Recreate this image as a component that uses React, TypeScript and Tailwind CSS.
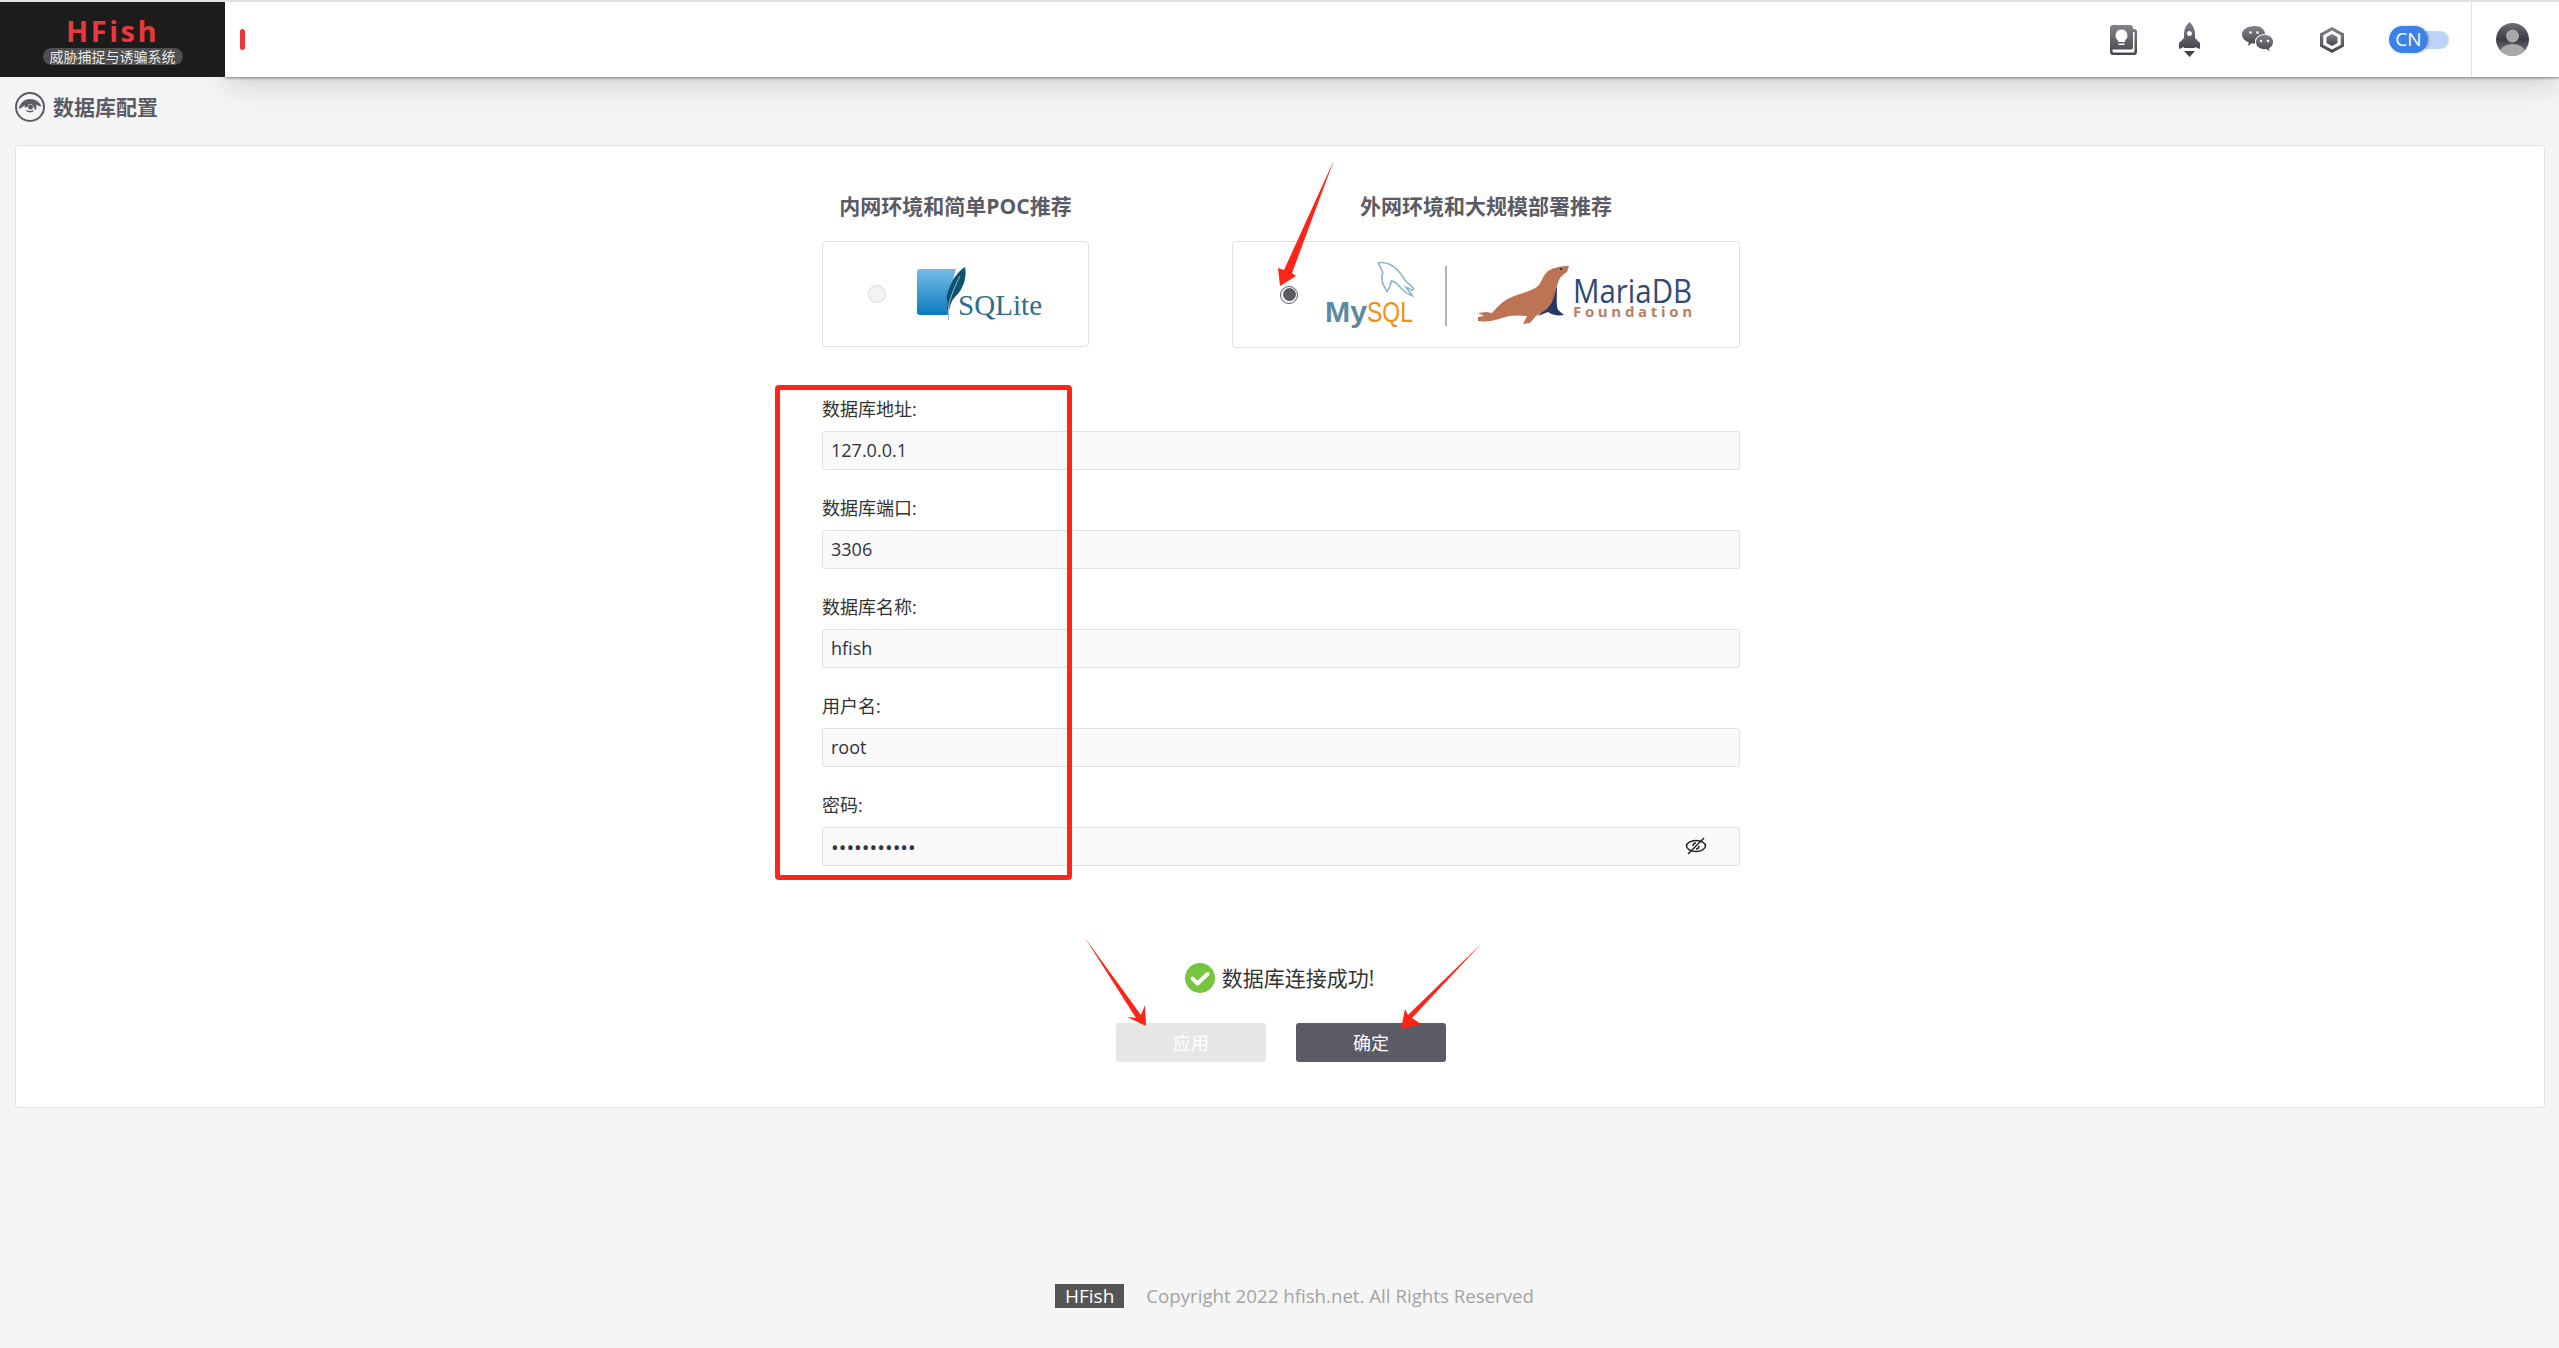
const fields = [
  { label: '数据库地址:', value: '127.0.0.1' },
  { label: '数据库端口:', value: '3306' },
  { label: '数据库名称:', value: 'hfish' },
  { label: '用户名:', value: 'root' },
];

function IconGradient({ id }: { id: string }) {
  return (
    <defs>
      <linearGradient id={id} x1="0" y1="0" x2="0" y2="1">
        <stop offset="0%" stopColor="#84848a" />
        <stop offset="100%" stopColor="#45454f" />
      </linearGradient>
    </defs>
  );
}

function BookIcon() {
  return (
    <svg width="27" height="30" viewBox="0 0 27 30" className="mr-[42px]">
      <IconGradient id="g-book" />
      <path
        fillRule="evenodd"
        fill="url(#g-book)"
        d="M3 0h17a3 3 0 0 1 3 3v1h1.500A2.500 2.500 0 0 1 27 6.500V27a3 3 0 0 1-3 3H3a3 3 0 0 1-3-3V3a3 3 0 0 1 3-3zM2.500 24.500V26a1.500 1.500 0 0 0 1.500 1.500h19a1.500 1.500 0 0 0 1.500-1.500V7H23v15.500a2 2 0 0 1-2 2z"
      />
      <path fill="#fff" d="M11.500 4.500a6 6 0 0 1 3.500 10.800V17h-7v-1.700A6 6 0 0 1 11.500 4.500zM8.500 18.500h6V20h-6z" />
    </svg>
  );
}

function RocketIcon() {
  return (
    <svg width="21" height="35" viewBox="0 0 21 35" className="mr-[42px]">
      <IconGradient id="g-rocket" />
      <path
        fillRule="evenodd"
        fill="url(#g-rocket)"
        d="M10.500 0C14 3 16 7 16 12v4l4 4a2 2 0 0 1 1 2v5l-5-2v1H5v-1l-5 2v-5a2 2 0 0 1 1-2l4-4v-4C5 7 7 3 10.500 0zM10.500 9a2.500 2.500 0 1 0 0 5 2.500 2.500 0 0 0 0-5z"
      />
      <path fill="#45454f" d="M5 29h11l-5.500 6z" />
    </svg>
  );
}

function WechatIcon() {
  return (
    <svg width="32" height="27" viewBox="0 0 32 27" className="mr-[46px]">
      <IconGradient id="g-wechat" />
      <path
        fill="url(#g-wechat)"
        d="M12.500 0C19 0 23 3.500 23 8c0 .3 0 .6-.1.900-5-.5-9.900 2.300-9.900 7 0 .6.100 1.200.200 1.700h-.700c-1 0-1.900-.100-2.800-.300L6 20l.800-3.500C2.800 15 0 12 0 8.500 0 3.500 5.500 0 12.500 0z"
      />
      <path
        fill="url(#g-wechat)"
        stroke="#fff"
        strokeWidth="1"
        d="M22.500 8.500c5 0 9 3 9 7.500 0 2.800-1.600 5-4 6.300l.800 3.700-4-2.500c-.6.100-1.200.100-1.800.100-5 0-9-3.100-9-7.600s4-7.500 9-7.500z"
      />
      <circle cx="8.500" cy="6.500" r="1.300" fill="#fff" />
      <circle cx="15.500" cy="6.500" r="1.300" fill="#fff" />
      <circle cx="19" cy="15" r="1.200" fill="#fff" />
      <circle cx="26" cy="15" r="1.200" fill="#fff" />
    </svg>
  );
}

function HexIcon() {
  return (
    <svg width="24" height="26" viewBox="0 0 24 26" className="mr-[45px]">
      <IconGradient id="g-hex" />
      <path
        fillRule="evenodd"
        fill="url(#g-hex)"
        d="M12 0l12 6.500v13L12 26 0 19.500v-13zM12 3.500L3.200 8.300v9.400L12 22.500l8.800-4.800V8.300z"
      />
      <path fill="url(#g-hex)" d="M12 7l5.500 3v6L12 19l-5.500-3v-6z" />
    </svg>
  );
}

function AvatarIcon() {
  return (
    <svg width="33" height="33" viewBox="0 0 33 33">
      <defs>
        <linearGradient id="g-avatar" x1="0" y1="0" x2="0" y2="1">
          <stop offset="0%" stopColor="#6e6e72" />
          <stop offset="50%" stopColor="#3b3b47" />
          <stop offset="100%" stopColor="#88888c" />
        </linearGradient>
      </defs>
      <clipPath id="c-avatar">
        <circle cx="16.500" cy="16.500" r="16.500" />
      </clipPath>
      <circle cx="16.500" cy="16.500" r="16.500" fill="url(#g-avatar)" />
      <g clipPath="url(#c-avatar)" fill="#a9a9ab">
        <circle cx="16.500" cy="13" r="6.500" />
        <path d="M3 33c0-8 6-12 13.500-12S30 25 30 33z" />
      </g>
    </svg>
  );
}

function TitleIcon() {
  return (
    <svg width="30" height="30" viewBox="0 0 30 30">
      <circle cx="15" cy="15" r="14" fill="none" stroke="#5b5b66" strokeWidth="2" />
      <path fill="#5b5b66" d="M3.500 17C5 11 9.500 7 15 7s10 3 11.500 7.500C22 14 20 11 15.500 11 10.500 11 8.500 15.500 3.500 17z" />
      <path fill="#5b5b66" d="M9.500 15a6 6 0 0 1 12 0c0 1.500-.5 2.500-1 3-2-2-2-6-5-6-3.500 0-2 5-6 3z" />
      <circle cx="15.500" cy="15" r="2.500" fill="#5b5b66" />
      <path fill="none" stroke="#5b5b66" strokeWidth="1.500" d="M11.500 18.500c2 1.500 5 1.500 7 0" />
    </svg>
  );
}

function SqliteLogo() {
  return (
    <svg width="132" height="60" viewBox="0 0 132 60">
      <defs>
        <linearGradient id="g-sqlite" x1="0" y1="0" x2="0" y2="1">
          <stop offset="0%" stopColor="#74bde8" />
          <stop offset="100%" stopColor="#0b79bd" />
        </linearGradient>
      </defs>
      <path fill="url(#g-sqlite)" d="M7 5h36c-3 10-7 27-8 46H7a3 3 0 0 1-3-3V8a3 3 0 0 1 3-3z" />
      <path fill="#0d526f" d="M52 3c2 9-1 22-10 30-3 3-5 8-6 13l-2-1c1-4 1-6 0-9-1-5 2-12 5-18 3-6 8-12 13-15z" />
      <path fill="none" stroke="#9ab8c6" strokeWidth="1" d="M47 12c-4 8-9 19-11 28-.5 5-1 10-.5 16" />
      <text x="45" y="51" fontFamily="'Liberation Serif', serif" fontSize="29" fill="#2a6f8a" textLength="84">
        SQLite
      </text>
    </svg>
  );
}

function MysqlMariaLogo() {
  return (
    <svg width="400" height="70" viewBox="0 0 400 70">
      {/* dolphin */}
      <path
        transform="translate(0 -3) scale(1.1 0.95)"
        fill="none"
        stroke="#8fb2c6"
        strokeWidth="1.500"
        d="M53 6c6-1 12 2 16 6 4 4 6 8 8 12 2 3 5 5 8 9l-1 2c-2-1-3-2-6-3 2 3 4 5 6 9-4-2-8-5-11-9-2-3-5-6-8-7l-1 4c-1 5-2 4-3 8-1-4-3-6-4-9-1-4-1-8 0-12-1-3-3-6-4-10z"
      />
      {/* divider */}
      <rect x="125" y="6" width="2" height="60" fill="#b3b3b8" />
      <text x="5" y="62" fontFamily="'Liberation Sans', sans-serif" fontSize="30" fontWeight="700" fill="#5d8aa3" textLength="42" lengthAdjust="spacingAndGlyphs">
        My
      </text>
      <text x="47" y="62" fontFamily="'Liberation Sans', sans-serif" fontSize="30" fill="#f29111" textLength="46" lengthAdjust="spacingAndGlyphs">
        SQL
      </text>
      {/* seal */}
      <path fill="#25376b" d="M237 26C237 36 236 44 238 50L244 55C238 56 232 55 228 52L218 56L230 42z" />
      <path
        fill="#bd7455"
        d="M249 6L247 12C244 14 241 16 239 20C236 27 235 36 232 42C228 50 222 52 216 56L210 63L203 64L207 56C198 55 190 55 182 58C174 61 166 62 158 61L158 57L164 56L158 53L166 52L172 53C178 46 184 40 192 37C202 33 212 31 218 26C222 22 223 15 228 11C234 7 243 6 249 6z"
      />
      <circle cx="241" cy="9" r="1.200" fill="#25376b" />
      <text x="253" y="43" fontFamily="'Open Sans', sans-serif" fontSize="32" fill="#2f4a78" textLength="119" lengthAdjust="spacingAndGlyphs">
        MariaDB
      </text>
      <text x="253" y="57" fontFamily="'Open Sans', sans-serif" fontSize="15" fontWeight="700" fill="#b98068" textLength="119">
        Foundation
      </text>
    </svg>
  );
}

function Radio({ checked }: { checked?: boolean }) {
  if (checked) {
    return (
      <span className="flex size-[18px] shrink-0 items-center justify-center rounded-full border border-[#5b5b66] bg-white">
        <span className="size-[13px] rounded-full bg-[#5b5b66]" />
      </span>
    );
  }
  return <span className="size-[18px] shrink-0 rounded-full border border-[#d9d9d9] bg-[#f3f3f3]" />;
}

function Field({ label, children }: { label: string; children: React.ReactNode }) {
  return (
    <div className="mb-[26px] last:mb-0">
      <div className="mb-[10px] text-[18px] leading-[24px] text-[#333]">{label}</div>
      {children}
    </div>
  );
}

const inputCls =
  'block h-[39px] w-full rounded-[3px] border border-[#e0e0e0] bg-[#fafafa] pb-[1px] pl-[8px] text-[18px] text-[#2f3340] outline-none';

export default function App() {
  return (
    <div className="relative flex min-h-[1348px] w-full flex-col overflow-hidden border-t-2 border-[#e2e2e2] bg-[#f5f5f5] font-['Open_Sans','Noto_Sans_CJK_SC',sans-serif]">
      {/* top bar */}
      <header className="flex h-[75px] shrink-0">
        <div className="z-10 flex w-[225px] flex-col items-center bg-[#1c1c1c]">
          <div className="mt-[12px] text-[29px] font-bold leading-[34px] tracking-[2.5px] text-[#e8383a]">HFish</div>
          <div className="rounded-full bg-[#4f4f4f] px-[7px] text-[14px] leading-[17px] text-[#e8e8e8]">
            威胁捕捉与诱骗系统
          </div>
        </div>
        <div className="flex flex-1 items-center bg-white pl-[15px] shadow-[0_1px_3px_rgba(0,0,0,0.45),0_10px_30px_rgba(0,0,0,0.13)]">
          <div className="h-[21px] w-[5px] rounded-full bg-[#e8383a]" />
          <div className="ml-auto flex h-full items-center">
            <BookIcon />
            <RocketIcon />
            <WechatIcon />
            <HexIcon />
            <div className="relative mr-[22px] flex h-[27px] w-[60px] items-center">
              <div className="h-[18px] w-full rounded-full bg-[#bdd4f6]" />
              <div className="absolute left-0 top-0 flex h-[27px] w-[39px] items-center justify-center rounded-full bg-[#3b82e8] text-[19px] leading-none text-white shadow-[1px_0_3px_rgba(0,0,0,0.25)]">
                CN
              </div>
            </div>
            <div className="flex h-full items-center border-l border-[#e2e2e2] pl-[24px] pr-[30px]">
              <AvatarIcon />
            </div>
          </div>
        </div>
      </header>

      {/* page title */}
      <div className="flex h-[68px] shrink-0 items-center gap-[8px] pb-[8px] pl-[15px]">
        <TitleIcon />
        <h1 className="text-[21px] font-bold leading-none text-[#5b5b66]">数据库配置</h1>
      </div>

      {/* main card */}
      <main className="ml-[15px] mr-[14px] flex h-[963px] shrink-0 flex-col items-center rounded-[3px] border border-[#e4e4e4] bg-white pl-[2px] pt-[45px]">
        <div className="w-[918px]">
          <div className="flex gap-[143px]">
            <div className="w-[267px]">
              <h2 className="mb-[20px] text-center text-[21px] font-bold leading-[30px] text-[#5b5b66]">内网环境和简单POC推荐</h2>
              <div className="flex h-[106px] items-center gap-[27px] rounded-[4px] border border-[#e0e0e0] pl-[45px]">
                <Radio />
                <SqliteLogo />
              </div>
            </div>
            <div className="w-[508px]">
              <h2 className="mb-[20px] text-center text-[21px] font-bold leading-[30px] text-[#5b5b66]">外网环境和大规模部署推荐</h2>
              <div className="flex h-[107px] items-center gap-[22px] overflow-hidden rounded-[4px] border border-[#e0e0e0] pl-[47px]">
                <Radio checked />
                <MysqlMariaLogo />
              </div>
            </div>
          </div>

          <div className="mt-[49px]">
            {fields.map((f) => (
              <Field key={f.label} label={f.label}>
                <input readOnly value={f.value} className={inputCls} />
              </Field>
            ))}
            <Field label="密码:">
              <div className="relative">
                <input
                  readOnly
                  type="password"
                  value="hfish123456"
                  className="block h-[39px] w-full rounded-[3px] border border-[#e0e0e0] bg-[#fafafa] pl-[8px] text-[20.5px] text-[#2f3340] outline-none"
                />
                <svg
                  width="22"
                  height="22"
                  viewBox="0 0 22 22"
                  fill="none"
                  stroke="#222"
                  strokeWidth="1.500"
                  className="absolute right-[33px] top-[8px]"
                >
                  <ellipse cx="11" cy="11" rx="9.500" ry="5.500" />
                  <path d="M3 19L19 3" />
                  <path d="M8 11a3 3 0 0 1 3-3M14 11a3 3 0 0 1-3 3" />
                </svg>
              </div>
            </Field>
          </div>

          <div className="mt-[97px] flex items-center justify-center gap-[7px] pr-[3px]">
            <svg width="30" height="30" viewBox="0 0 30 30">
              <circle cx="15" cy="15" r="15" fill="#75c63e" />
              <path d="M7.500 15.500l5 5 10-9.500" fill="none" stroke="#fff" strokeWidth="4" strokeLinecap="round" strokeLinejoin="round" />
            </svg>
            <span className="text-[21px] leading-[30px] text-[#333]">数据库连接成功!</span>
          </div>

          <div className="mt-[30px] flex justify-center gap-[30px]">
            <button className="h-[39px] w-[150px] rounded-[3px] bg-[#e6e6e6] pt-[1px] text-[18px] text-white">应用</button>
            <button className="h-[39px] w-[150px] rounded-[3px] bg-[#5b5b66] pt-[1px] text-[18px] text-white">确定</button>
          </div>
        </div>
      </main>

      {/* footer */}
      <footer className="mt-[176px] flex items-center justify-center gap-[22px] pl-[30px]">
        <span className="bg-[#555] px-[10px] text-[19px] leading-[24px] text-white">HFish</span>
        <span className="text-[18.7px] leading-[24px] text-[#a3a3a3]">Copyright 2022 hfish.net. All Rights Reserved</span>
      </footer>

      {/* red annotations drawn over the screenshot */}
      <div className="pointer-events-none absolute left-[775px] top-[383px] h-[495px] w-[297px] rounded-[4px] border-[5px] border-[#ff2418]" />
      <svg width="2559" height="1348" viewBox="0 0 2559 1348" className="pointer-events-none absolute left-0 top-[-2px]">
        <path fill="#ff2418" d="M1334 160L1292 273L1296 276L1280 286L1278 268L1284 270z" />
        <path fill="#ff2418" d="M1085 938L1141 1015L1145 1005L1146 1026L1127 1017L1136 1018z" />
        <path fill="#ff2418" d="M1481 944L1412 1018L1421 1024L1401 1029L1405 1009L1408 1015z" />
      </svg>
    </div>
  );
}
